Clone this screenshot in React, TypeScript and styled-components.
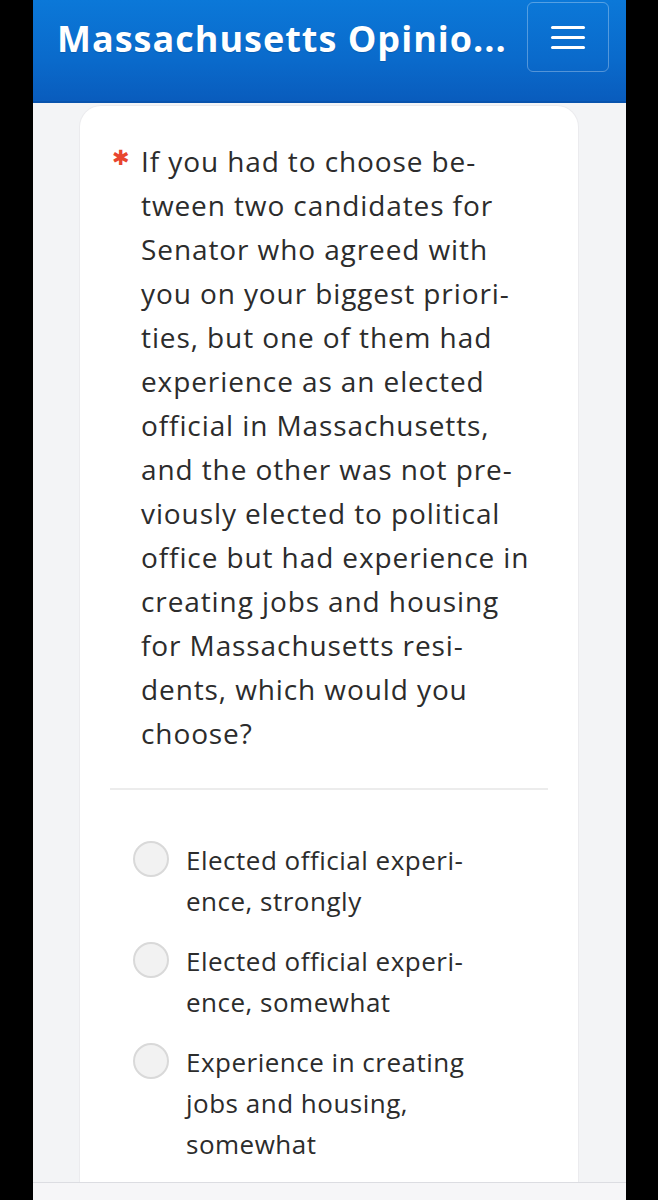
import styled, { createGlobalStyle } from 'styled-components';

const GlobalStyle = createGlobalStyle`
  html, body {
    margin: 0;
    padding: 0;
    background: #000;
  }
  body {
    font-family: "Open Sans", "Noto Sans", sans-serif;
  }
`;

const questionLines = [
  'If you had to choose be-',
  'tween two candidates for',
  'Senator who agreed with',
  'you on your biggest priori-',
  'ties, but one of them had',
  'experience as an elected',
  'official in Massachusetts,',
  'and the other was not pre-',
  'viously elected to political',
  'office but had experience in',
  'creating jobs and housing',
  'for Massachusetts resi-',
  'dents, which would you',
  'choose?',
];

const options = [
  ['Elected official experi-', 'ence, strongly'],
  ['Elected official experi-', 'ence, somewhat'],
  ['Experience in creating', 'jobs and housing,', 'somewhat'],
];

export default function App() {
  return (
    <>
      <GlobalStyle />
      <Screen>
        <Frame>
          <Header>
            <Brand>Massachusetts Opinio...</Brand>
            <MenuButton aria-label="Menu">
              <MenuBar />
              <MenuBar />
              <MenuBar />
            </MenuButton>
          </Header>
          <Main>
            <Card>
              <Question>
                <Required>✱</Required>
                <QuestionText>
                  {questionLines.map((line) => (
                    <Line key={line}>{line}</Line>
                  ))}
                </QuestionText>
              </Question>
              <Divider />
              <Options>
                {options.map((lines, i) => (
                  <Option key={i}>
                    <Radio />
                    <OptionLabel>
                      {lines.map((line) => (
                        <Line key={line}>{line}</Line>
                      ))}
                    </OptionLabel>
                  </Option>
                ))}
              </Options>
            </Card>
          </Main>
          <Footer />
        </Frame>
      </Screen>
    </>
  );
}

const Screen = styled.div`
  height: 1200px;
  display: flex;
  padding-left: 33px;
  overflow: hidden;
`;

const Frame = styled.div`
  width: 593px;
  height: 1200px;
  display: flex;
  flex-direction: column;
  background: #f3f4f6;
`;

const Header = styled.header`
  height: 103px;
  box-sizing: border-box;
  flex-shrink: 0;
  display: flex;
  align-items: flex-start;
  justify-content: space-between;
  padding: 2px 17px 0 24px;
  background: linear-gradient(180deg, #0b78d8 0%, #0a6acb 60%, #095cbd 100%);
  border-bottom: 2px solid #0853ad;
`;

const Brand = styled.div`
  color: #fff;
  font-weight: 700;
  font-size: 36px;
  line-height: 74px;
  letter-spacing: 1px;
  white-space: nowrap;
  text-shadow: 0 1px 1px rgba(0, 0, 0, 0.15);
`;

const MenuButton = styled.div`
  width: 82px;
  height: 70px;
  box-sizing: border-box;
  border: 1px solid rgba(255, 255, 255, 0.3);
  border-radius: 6px;
  display: flex;
  flex-direction: column;
  align-items: center;
  justify-content: center;
  gap: 7px;
`;

const MenuBar = styled.span`
  display: block;
  width: 34px;
  height: 3px;
  border-radius: 2px;
  background: #fff;
`;

const Main = styled.main`
  flex: 1;
  overflow: hidden;
  padding: 2px 47px 0 46px;
`;

const Card = styled.section`
  background: #fff;
  border-radius: 22px 22px 0 0;
  border: 1px solid #ebebee;
  border-bottom: none;
  min-height: 1100px;
  padding: 33px 30px 0 30px;
`;

const Question = styled.div`
  display: flex;
  align-items: flex-start;
`;

const Required = styled.span`
  width: 31px;
  flex-shrink: 0;
  color: #e8452f;
  font-family: "DejaVu Sans", sans-serif;
  font-size: 21px;
  font-weight: 700;
  line-height: 44px;
  padding-left: 2px;
  margin-top: -3px;
  box-sizing: border-box;
`;

const QuestionText = styled.div`
  color: #2c2c2c;
  font-size: 28px;
  line-height: 44px;
  letter-spacing: 0.9px;
`;

const Line = styled.div`
  white-space: nowrap;
`;

const Divider = styled.hr`
  margin: 33px 0 0 0;
  border: none;
  height: 2px;
  background: #ececec;
`;

const Options = styled.div`
  display: flex;
  flex-direction: column;
  gap: 20px;
  padding: 51px 0 0 23px;
`;

const Option = styled.label`
  display: flex;
  align-items: flex-start;
  gap: 17px;
`;

const Radio = styled.span`
  width: 36px;
  height: 36px;
  flex-shrink: 0;
  box-sizing: border-box;
  border-radius: 50%;
  border: 2px solid #d9d9d9;
  background: #f2f2f2;
`;

const OptionLabel = styled.div`
  color: #2c2c2c;
  font-size: 26px;
  line-height: 41px;
  letter-spacing: 0.5px;
  margin-top: -1px;
`;

const Footer = styled.footer`
  height: 17px;
  flex-shrink: 0;
  background: #f6f6f8;
  border-top: 1px solid #dcdde2;
`;
